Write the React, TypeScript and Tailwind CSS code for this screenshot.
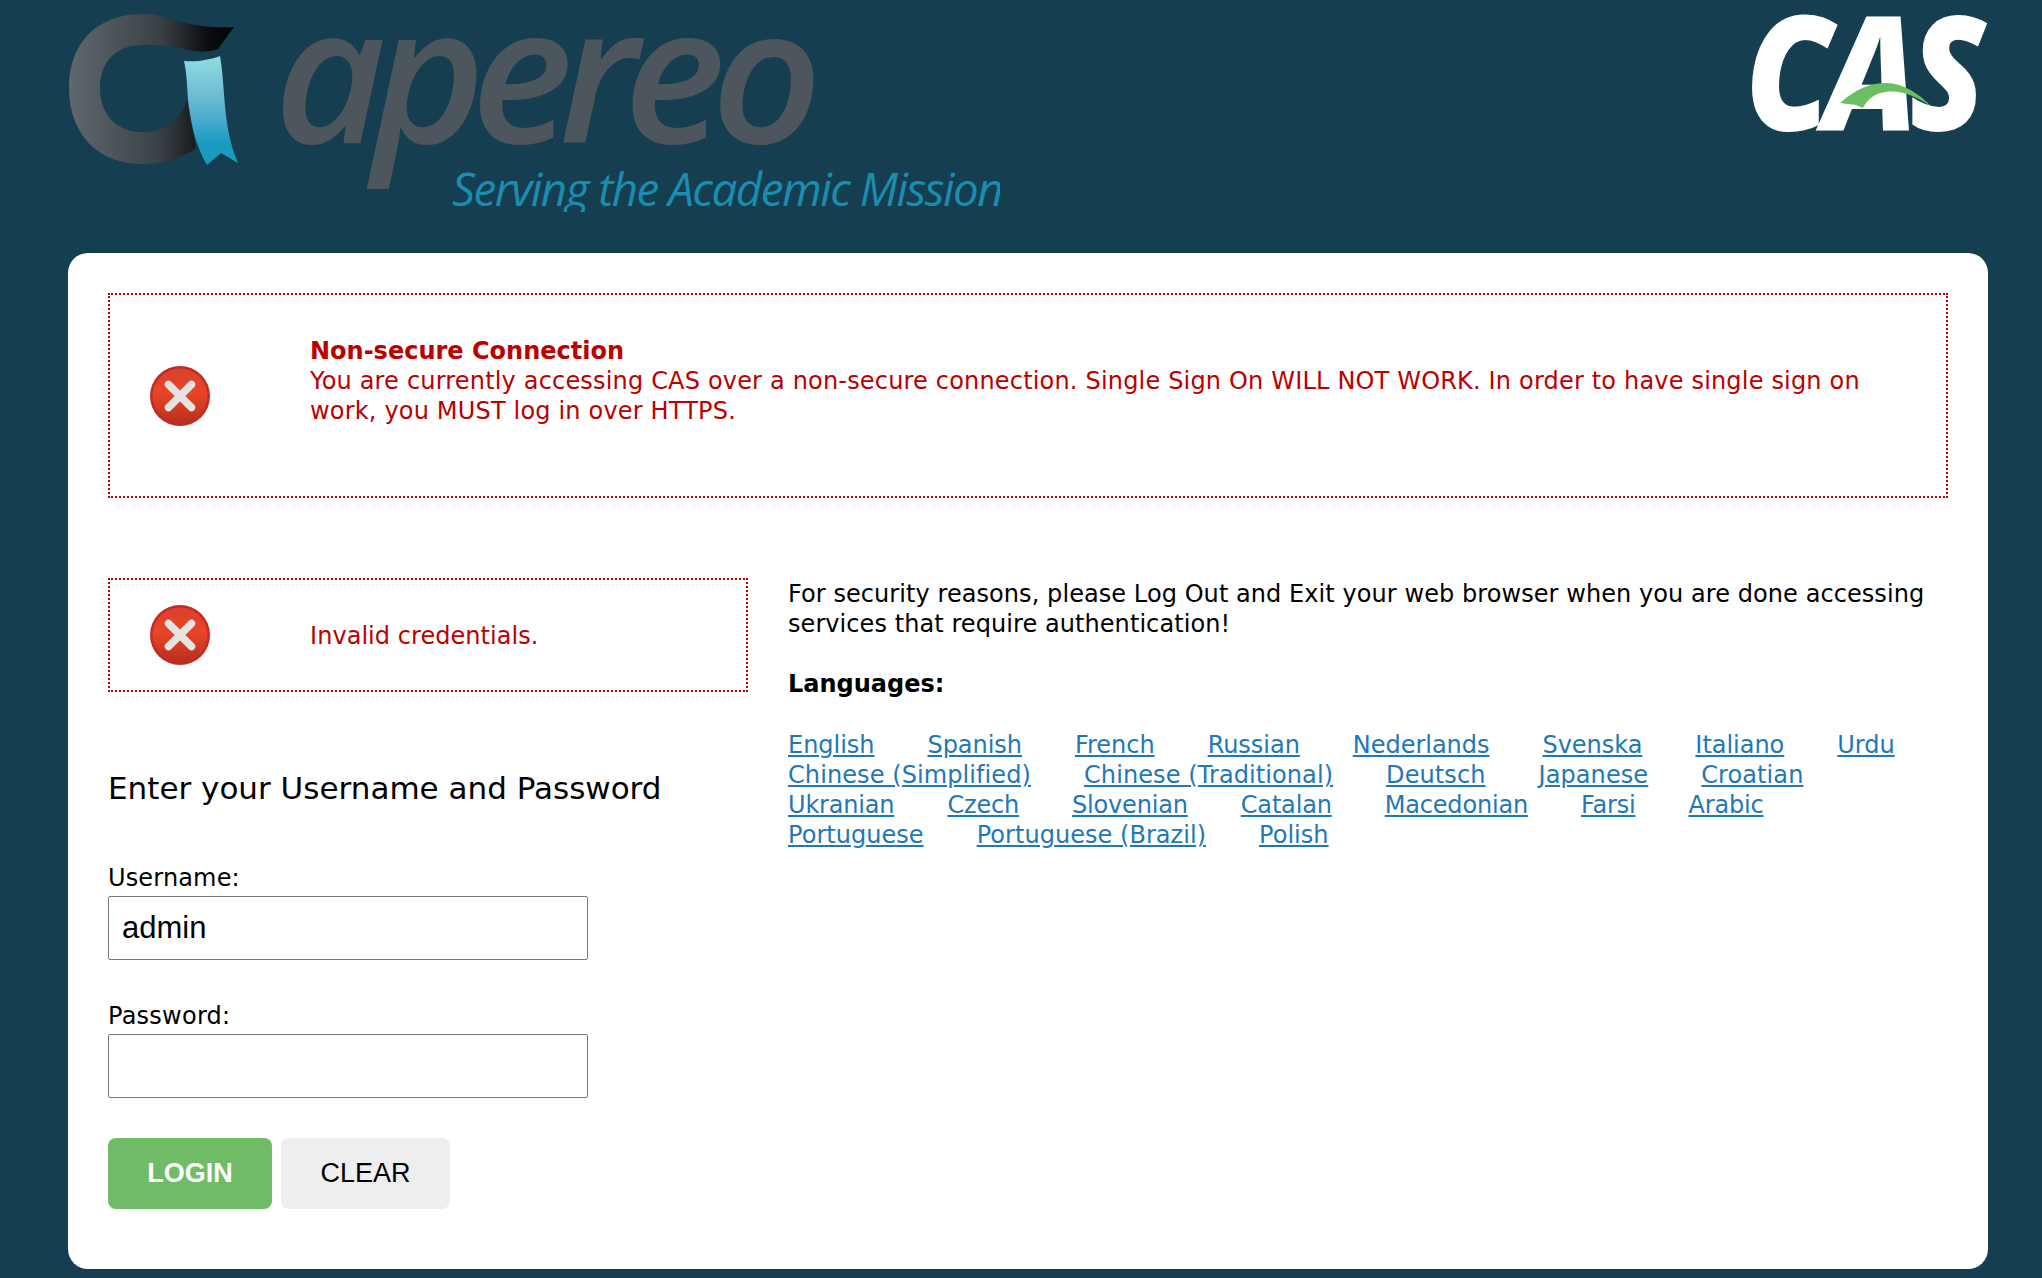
const VERDANA = "font-['DejaVu_Sans',Verdana,sans-serif]";

function ErrorIcon() {
  return (
    <svg width="60" height="60" viewBox="0 0 60 60" className="block shrink-0">
      <defs>
        <linearGradient id="errFill" x1="0" y1="0" x2="0" y2="1">
          <stop offset="0" stopColor="#d9402f" />
          <stop offset="0.45" stopColor="#ea4426" />
          <stop offset="1" stopColor="#b5301f" />
        </linearGradient>
      </defs>
      <circle cx="30" cy="30" r="30" fill="#c42a25" />
      <circle cx="30" cy="30" r="27.5" fill="url(#errFill)" />
      <path d="M18.5 18.5 L41.5 41.5 M41.5 18.5 L18.5 41.5" stroke="#e6e4e2" strokeWidth="7.5" strokeLinecap="round" />
    </svg>
  );
}

function ApereoLogo() {
  return (
    <svg width="1000" height="212" viewBox="0 0 1000 212" className="block">
      <defs>
        <linearGradient id="ringGrad" x1="0" y1="0" x2="1" y2="0">
          <stop offset="0" stopColor="#5f686e" />
          <stop offset="0.55" stopColor="#3a4146" />
          <stop offset="0.85" stopColor="#0a0c0f" />
          <stop offset="1" stopColor="#020306" />
        </linearGradient>
        <linearGradient id="ribbonGrad" x1="0" y1="0" x2="0" y2="1">
          <stop offset="0" stopColor="#92dce2" />
          <stop offset="0.45" stopColor="#62b5d1" />
          <stop offset="0.8" stopColor="#1b9ac0" />
          <stop offset="1" stopColor="#1b9ac0" />
        </linearGradient>
      </defs>
      <path
        d="M69 88 C69 42 98 14 142 14 C170 14 188 30 234 27 L218 49 C205 53 196 52 184 49 C168 45 155 45 142 45 C116 45 100 62 100 88 C100 114 116 132 142 132 C162 132 178 124 187 100 L196 148 C180 160 160 164 142 164 C98 164 69 134 69 88 Z"
        fill="url(#ringGrad)"
      />
      <path
        d="M184 61 C196 62 210 60 220 56 C226 90 222 125 238 163 L221 153 L207 165 C196 145 192 130 188 100 C187 85 187 75 184 61 Z"
        fill="url(#ribbonGrad)"
      />
      <text
        x="274"
        y="143"
        textLength="534"
        lengthAdjust="spacingAndGlyphs"
        letterSpacing="-14"
        fontFamily="'Open Sans', 'Noto Sans', sans-serif"
        fontStyle="italic"
        fontWeight="600"
        fontSize="190"
        fill="#4d565c"
      >
        apereo
      </text>
      <text
        x="452"
        y="206"
        textLength="550"
        lengthAdjust="spacingAndGlyphs"
        letterSpacing="-1.5"
        fontFamily="'Open Sans', 'Noto Sans', sans-serif"
        fontStyle="italic"
        fontWeight="400"
        fontSize="46"
        fill="#1a8db0"
      >
        Serving the Academic Mission
      </text>
    </svg>
  );
}

function CasLogo() {
  return (
    <svg width="240" height="140" viewBox="0 0 240 140" className="block overflow-visible">
      <text
        x="-3"
        y="127"
        textLength="232"
        lengthAdjust="spacingAndGlyphs"
        letterSpacing="-10"
        fontFamily="'Open Sans', 'Liberation Sans', sans-serif"
        fontStyle="italic"
        fontWeight="800"
        fontSize="160"
        fill="#ffffff"
      >
        CAS
      </text>
      <path d="M92 100 C108 86 122 80 138 80 C155 80 170 90 184 104 C168 93 152 87 138 89 C128 90 120 95 115 105 L108 102 Z" fill="#6cbe63" />
    </svg>
  );
}

const languages = [
  { name: "English", cls: "tracking-[-0.03px]" },
  { name: "Spanish", cls: "tracking-[-0.03px]" },
  { name: "French", cls: "tracking-[-0.03px]" },
  { name: "Russian", cls: "tracking-[-0.03px]" },
  { name: "Nederlands", cls: "tracking-[-0.03px]" },
  { name: "Svenska", cls: "tracking-[-0.03px]" },
  { name: "Italiano", cls: "tracking-[-0.03px]" },
  { name: "Urdu", cls: "tracking-[-0.03px]" },
  { name: "Chinese (Simplified)", cls: "tracking-[0.09px]" },
  { name: "Chinese (Traditional)", cls: "tracking-[0.09px]" },
  { name: "Deutsch", cls: "tracking-[0.09px]" },
  { name: "Japanese", cls: "tracking-[0.09px]" },
  { name: "Croatian", cls: "tracking-[0.09px]" },
  { name: "Ukranian", cls: "tracking-[-0.18px]" },
  { name: "Czech", cls: "tracking-[-0.18px]" },
  { name: "Slovenian", cls: "tracking-[-0.18px]" },
  { name: "Catalan", cls: "tracking-[-0.18px]" },
  { name: "Macedonian", cls: "tracking-[-0.18px]" },
  { name: "Farsi", cls: "tracking-[-0.18px]" },
  { name: "Arabic", cls: "tracking-[-0.18px]" },
  { name: "Portuguese", cls: "tracking-[0.04px]" },
  { name: "Portuguese (Brazil)", cls: "tracking-[0.04px]" },
  { name: "Polish", cls: "tracking-[0.04px]" },
];

export default function App() {
  return (
    <div className={`min-h-[1278px] bg-[#153e50] text-black ${VERDANA} text-[24px] leading-[30px]`}>
      <header className="flex justify-between h-[253px] pr-[54px]">
        <ApereoLogo />
        <div className="pt-[3px]">
          <CasLogo />
        </div>
      </header>
      <main className="mx-[68px] w-[1920px] h-[1016px] bg-white rounded-[20px] p-[40px]">
        <div className="flex items-center h-[205px] border-2 border-dotted border-[#bb0000] text-[#bb0000] pl-[40px]">
          <ErrorIcon />
          <div className="ml-[100px] pr-[60px] pb-[30px]">
            <div className="font-bold">Non-secure Connection</div>
            <p className="tracking-[0.18px]">
              You are currently accessing CAS over a non-secure connection. Single Sign On WILL NOT WORK. In order to have single sign on work, you MUST log in over HTTPS.
            </p>
          </div>
        </div>
        <div className="flex mt-[80px]">
          <section className="w-[640px] shrink-0">
            <div className="flex items-center h-[114px] border-2 border-dotted border-[#bb0000] text-[#bb0000] pl-[40px]">
              <ErrorIcon />
              <span className="ml-[100px] pt-[2px] tracking-[0.05px]">Invalid credentials.</span>
            </div>
            <h2 className="mt-[76px] text-[31px] leading-[40px]">Enter your Username and Password</h2>
            <label className="block mt-[55px] h-[30px] tracking-[0.15px]">Username:</label>
            <div className="mt-[3px] w-[480px] h-[64px] border border-[#767676] rounded-[2px] pl-[13px] flex items-center font-['Liberation_Sans',Arial,sans-serif] text-[31px]">
              admin
            </div>
            <label className="block mt-[41px] h-[30px] tracking-[0.25px]">Password:</label>
            <div className="mt-[3px] w-[480px] h-[64px] border border-[#767676] rounded-[2px]" />
            <div className="flex gap-[9px] mt-[40px] font-['Liberation_Sans',Arial,sans-serif] text-[27px]">
              <button className="w-[164px] h-[71px] pb-[2px] rounded-[8px] bg-[#6fbb66] text-white font-bold">LOGIN</button>
              <button className="w-[169px] h-[71px] pb-[2px] rounded-[8px] bg-[#eeeeee] text-black">CLEAR</button>
            </div>
          </section>
          <section className="ml-[40px] flex-1 min-w-0">
            <p className="pt-[1px] tracking-[0.07px]">For security reasons, please Log Out and Exit your web browser when you are done accessing services that require authentication!</p>
            <h3 className="font-bold mt-[30px]">Languages:</h3>
            <div className="mt-[31px] flex flex-wrap gap-x-[53px]">
              {languages.map((l) => (
                <a key={l.name} href="#" className={`text-[#2278b5] underline ${l.cls}`}>
                  {l.name}
                </a>
              ))}
            </div>
          </section>
        </div>
      </main>
    </div>
  );
}
